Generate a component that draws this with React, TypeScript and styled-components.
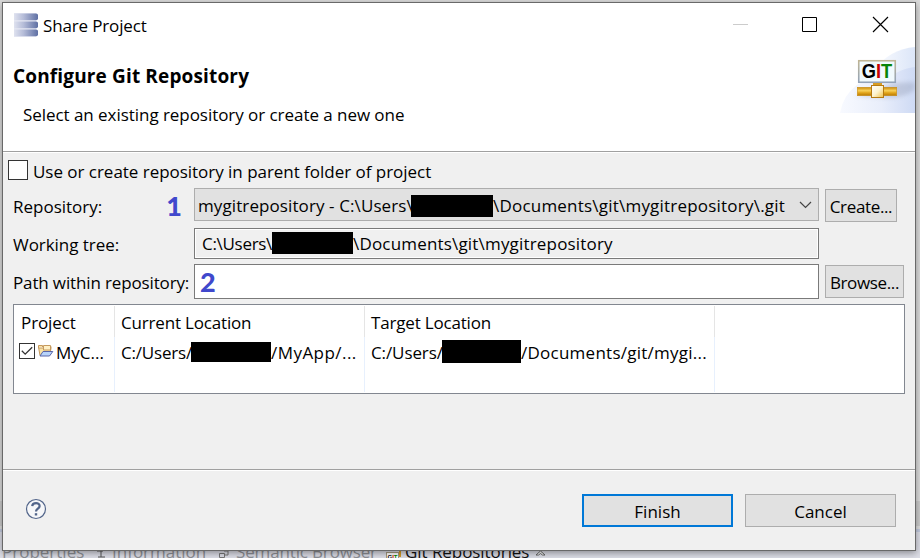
import React from 'react';
import styled, { createGlobalStyle } from 'styled-components';

const Global = createGlobalStyle`
  *, *::before, *::after { box-sizing: border-box; }
  html, body { margin: 0; padding: 0; overflow: hidden; }
  body { font: 17px/24px "Open Sans", "Segoe UI", sans-serif; color: #000; }
`;

const Screen = styled.div`
  position: relative;
  width: 920px;
  height: 558px;
  padding: 2px 0 0 2px;
  overflow: hidden;
  background: linear-gradient(#dcdcdc 0 501px, #cccccc 501px 526px, #dedede 526px 529px, #c3cbdf 529px 532px, #dcdde6 532px);
`;

const Text = styled.span<{ $ls?: number }>`
  display: block;
  flex: none;
  height: 24px;
  line-height: 26px;
  white-space: pre;
  letter-spacing: ${(p) => p.$ls ?? 0}px;
`;

const TabStrip = styled.div`
  position: absolute;
  left: 0;
  top: 539px;
  width: 920px;
  height: 24px;
`;

const BackTab = styled.div<{ $x: number; $active?: boolean }>`
  position: absolute;
  left: ${(p) => p.$x}px;
  top: 0;
  display: flex;
  align-items: flex-start;
  color: ${(p) => (p.$active ? '#111' : '#8d8f95')};
`;

const TabIcon = styled.svg<{ $gap?: number }>`
  display: block;
  flex: none;
  margin: 8px ${(p) => p.$gap ?? 4}px 0 0;
`;

const Dialog = styled.div`
  position: relative;
  display: flex;
  flex-direction: column;
  width: 914px;
  height: 549px;
  border: 1px solid #696969;
  background: #f0f0f0;
  box-shadow: 0 2px 7px rgba(0, 0, 0, 0.38);
`;

const Header = styled.header`
  display: flex;
  justify-content: space-between;
  height: 150px;
  background: #fff;
  border-bottom: 1px solid #fff;
  box-shadow: inset 0 -1px #a0a0a0;
`;

const HeaderText = styled.div`
  padding: 10px 0 0 10px;
`;

const TitleRow = styled.div`
  display: flex;
  gap: 5px;
  height: 24px;
  padding-left: 1px;
`;

const Heading = styled.h1`
  margin: 27px 0 0;
  height: 24px;
  font-size: 19px;
  line-height: 24px;
  font-weight: 700;
  letter-spacing: 0.15px;
  white-space: nowrap;
`;

const Subtitle = styled.div`
  margin: 14px 0 0 10px;
`;

const HeaderSide = styled.div`
  display: flex;
  flex-direction: column;
  align-items: flex-end;
`;

const WindowButtons = styled.div`
  display: flex;
  height: 44px;
  padding: 13px 26px 0 0;
`;

const Body = styled.main`
  display: flex;
  flex-direction: column;
  height: 318px;
  padding: 7px 10px 0;
  border-bottom: 1px solid #fff;
  box-shadow: inset 0 -1px #a0a0a0;
`;

const CheckRow = styled.label`
  display: flex;
  gap: 5px;
  height: 28px;
  margin-left: -5px;
`;

const CheckLabel = styled(Text)`
  line-height: 24px;
`;

const CheckBox = styled.span`
  flex: none;
  width: 20px;
  height: 20px;
  border: 1px solid #333;
  background: #fff;
`;

const FormRow = styled.div<{ $height: number }>`
  display: grid;
  grid-template-columns: 181px 625px auto;
  justify-content: start;
  height: ${(p) => p.$height}px;
`;

const LabelCell = styled.div<{ $top: number }>`
  display: flex;
  justify-content: space-between;
  padding: ${(p) => p.$top}px 12px 0 0;
`;

const Marker = styled.span`
  height: 24px;
  padding-left: 1px;
  font-family: Lato, "Open Sans", sans-serif;
  font-size: 27px;
  line-height: 23px;
  font-weight: 900;
  color: #4048cc;
`;

const Combo = styled.div`
  display: flex;
  height: 33px;
  padding: 4px 6px 0 3px;
  border: 1px solid #adadad;
  background: #e1e1e1;
`;

const ComboArrow = styled.svg`
  margin: 8px 0 0 auto;
`;

const Field = styled.div<{ $height: number; $readOnly?: boolean }>`
  display: flex;
  height: ${(p) => p.$height}px;
  padding: ${(p) => (p.$readOnly ? '2px 0 0 7px' : '5px 0 0 4px')};
  border: 1px solid #7a7a7a;
  background: ${(p) => (p.$readOnly ? '#f0f0f0' : '#fff')};
  box-shadow: inset 0 0 0 1px #fff;
`;

const PathPart = styled(Text)<{ $w: number }>`
  width: ${(p) => p.$w}px;
`;

const Redaction = styled.span<{ $w: number; $h: number; $top?: number }>`
  flex: none;
  position: relative;
  width: ${(p) => p.$w}px;
  height: ${(p) => p.$h}px;
  margin-top: ${(p) => p.$top ?? 0}px;
  background: #000;
`;

const Button = styled.button<{ $w: number; $primary?: boolean; $ls?: number }>`
  width: ${(p) => p.$w}px;
  height: 33px;
  padding: ${(p) => (p.$primary ? '4px 0 1px' : '5px 0 2px')};
  border: ${(p) => (p.$primary ? '2px solid #0078d7' : '1px solid #adadad')};
  border-radius: 0;
  background: #e1e1e1;
  color: #000;
  font: inherit;
  letter-spacing: ${(p) => p.$ls ?? 0}px;
  white-space: nowrap;
`;

const SideButton = styled(Button)`
  margin: 1px 0 0 6px;
`;

const Table = styled.div`
  display: grid;
  grid-template-columns: 100px 250px 350px 1fr;
  grid-template-rows: 31px 55px;
  width: 892px;
  height: 90px;
  margin-top: 5px;
  padding: 1px;
  border: 1px solid #828790;
  background: #fff;
`;

const HeadCell = styled.div`
  padding: 4px 0 0 6px;
  border-right: 1px solid #e5e5e5;
`;

const Cell = styled.div`
  display: flex;
  padding: 3px 0 0 6px;
  border-right: 1px solid #e7f0fd;
`;

const EmptyCell = styled.div``;

const Footer = styled.footer`
  display: flex;
  align-items: flex-start;
  height: 79px;
  padding: 23px 19px 0 22px;
`;

const Actions = styled.div`
  display: flex;
  gap: 12px;
  margin-left: auto;
`;

function DatabaseIcon() {
  return (
    <svg width="24" height="24" viewBox="0 0 24 24">
      <defs>
        <linearGradient id="db">
          <stop offset="0" stopColor="#dfe2ef" />
          <stop offset=".4" stopColor="#b5bcd8" />
          <stop offset="1" stopColor="#5f70a4" />
        </linearGradient>
      </defs>
      <rect width="22.5" height="24" fill="#e6e8f3" />
      {[0, 8, 16].map((y) => (
        <path key={y} d={`M0 ${y + 0.5}H22Q24 ${y + 0.5} 24 ${y + 2}V${y + 5.5}Q24 ${y + 7.3} 22 ${y + 7.3}H0Z`} fill="url(#db)" />
      ))}
    </svg>
  );
}

function WindowIcons() {
  return (
    <svg width="157" height="18" viewBox="0 0 157 18" fill="none">
      <path d="M1 8.5H16" stroke="#ccc" />
      <path d="M70.5 1.5H84.5V15.5H70.5Z" stroke="#000" />
      <path d="M141 1L156 16M156 1L141 16" stroke="#000" strokeWidth="1.15" />
    </svg>
  );
}

function GitBanner() {
  return (
    <svg width="75" height="66" viewBox="840 47 75 66">
      <defs>
        <linearGradient id="sky">
          <stop offset="0" stopColor="#f8faff" />
          <stop offset=".55" stopColor="#e9eefb" />
          <stop offset="1" stopColor="#cedaf4" />
        </linearGradient>
        <linearGradient id="sky2">
          <stop offset="0" stopColor="#fbfcff" />
          <stop offset="1" stopColor="#dce6f8" />
        </linearGradient>
        <linearGradient id="pipe" x2="0" y2="1">
          <stop offset="0" stopColor="#c98b0c" />
          <stop offset=".4" stopColor="#f8d058" />
          <stop offset=".65" stopColor="#e2a51c" />
          <stop offset="1" stopColor="#b87800" />
        </linearGradient>
        <linearGradient id="knob" x2="1" y2="1">
          <stop offset="0" stopColor="#fff" />
          <stop offset=".5" stopColor="#fdf3cf" />
          <stop offset="1" stopColor="#efc14a" />
        </linearGradient>
        <linearGradient id="frame" x2="0" y2="1">
          <stop offset="0" stopColor="#c0b594" />
          <stop offset="1" stopColor="#93a3b9" />
        </linearGradient>
        <filter id="soft" x="-30%" y="-50%" width="160%" height="200%">
          <feGaussianBlur stdDeviation="2" />
        </filter>
      </defs>
      <path d="M874 70Q890 49 915 47V113H874Z" fill="url(#sky2)" />
      <path d="M840 113Q843 95 858 84Q885 77 896 73Q905 68 915 67V113Z" fill="url(#sky)" />
      <path d="M855 96Q884 87 894 83L915 82V90Q903 98 888 98Z" fill="#8791aa" opacity=".32" filter="url(#soft)" />
      <rect x="858.75" y="60.75" width="36.5" height="21.5" fill="#f1fafd" stroke="url(#frame)" strokeWidth="1.6" />
      <text x="861.8" y="78.4" textLength="30.5" lengthAdjust="spacingAndGlyphs" fontFamily="Liberation Sans, Arial, sans-serif" fontWeight="700" fontSize="20">
        G<tspan fill="#c90000">I</tspan><tspan fill="#078507">T</tspan>
      </text>
      <rect x="873" y="83" width="9" height="3" fill="#d89d22" />
      <rect x="857.3" y="87.3" width="39.4" height="8.4" fill="url(#pipe)" stroke="#ca8e18" strokeWidth=".6" />
      <rect x="871.5" y="85.5" width="12" height="12" fill="url(#knob)" stroke="#b57a12" />
    </svg>
  );
}

function Tick() {
  return (
    <svg width="16" height="16" viewBox="0 0 16 16" fill="none">
      <rect x=".5" y=".5" width="15" height="15" fill="#fff" stroke="#333" />
      <path d="M2.8 7.8L6.2 11.2L13.2 4.2" stroke="#333" strokeWidth="1.3" />
    </svg>
  );
}

function FolderIcon() {
  return (
    <svg width="17" height="14" viewBox="0 0 17 14">
      <path d="M1.5 3V1.5H5.5V3M1.5 3L3 11.5H12.5L14 4.5V2.5L8 2.5L7 4H1.5Z" fill="#fbe3a4" stroke="#c69a5e" />
      <path d="M6.5 1.5H13.5V6H6.5Z" fill="#fff0c4" stroke="#c69a5e" />
      <path d="M6 7.5H15.8L12.5 12H3L6 7.5Z" fill="#b8d4fa" stroke="#5a66a8" />
    </svg>
  );
}

const RowIcon = styled.span<{ $top: number; $ml?: number; $mr?: number }>`
  display: flex;
  flex: none;
  align-self: flex-start;
  margin: ${(p) => p.$top}px ${(p) => p.$mr ?? 0}px 0 ${(p) => p.$ml ?? 0}px;
`;

function HelpIcon() {
  return (
    <svg width="22" height="22" viewBox="0 0 22 22" fill="none" stroke="#52658a">
      <circle cx="11" cy="11" r="9.5" strokeWidth="1.2" fill="#f6f7f9" />
      <path d="M7.2 8.1C7.5 4.2 14.8 4.2 14.6 8.1C14.5 10.5 11 10.6 11 13.4" strokeWidth="2.2" />
      <path d="M11 15.2V17.5" strokeWidth="2.4" />
    </svg>
  );
}

export default function App() {
  return (
    <>
      <Global />
      <Screen>
        <TabStrip>
          <BackTab $x={2}><Text>Properties</Text></BackTab>
          <BackTab $x={94}>
            <TabIcon width="14" height="14" $gap={4}>
              <path d="M3 4H9M7 4V10M4 10H11" stroke="#555" fill="none" />
              <path d="M0 12H13" stroke="#9db4d8" strokeWidth="2" />
            </TabIcon>
            <Text>Information</Text>
          </BackTab>
          <BackTab $x={217}>
            <TabIcon width="15" height="14" $gap={4}>
              <path d="M2.5 6.5H7.5V10.5H2.5ZM7 4H11V8H8" stroke="#777" fill="none" />
              <path d="M8 12H14" stroke="#9db4d8" strokeWidth="2" />
            </TabIcon>
            <Text $ls={-0.15}>Semantic Browser</Text>
          </BackTab>
          <BackTab $x={386} $active>
            <TabIcon width="15" height="14" $gap={4}>
              <path d="M12 3H14V10" stroke="#d59a25" strokeWidth="2" fill="none" />
              <rect x=".5" y="5.5" width="12" height="8" fill="#fff" stroke="#a59b82" />
              <text x="1.5" y="12" fontSize="6" fontWeight="700" fontFamily="Liberation Sans, sans-serif">
                G<tspan fill="#c00">I</tspan><tspan fill="#080">T</tspan>
              </text>
            </TabIcon>
            <Text $ls={-0.06}>Git Repositories</Text>
            <TabIcon width="20" height="14">
              <path d="M7 8L11.5 4L16 8H13.5L11.5 6.5L9.5 8Z" stroke="#666" fill="#fff" />
            </TabIcon>
          </BackTab>
        </TabStrip>

        <Dialog>
          <Header>
            <HeaderText>
              <TitleRow>
                <DatabaseIcon />
                <Text $ls={-0.15}>Share Project</Text>
              </TitleRow>
              <Heading>Configure Git Repository</Heading>
              <Subtitle><Text $ls={-0.05}>Select an existing repository or create a new one</Text></Subtitle>
            </HeaderText>
            <HeaderSide>
              <WindowButtons><WindowIcons /></WindowButtons>
              <GitBanner />
            </HeaderSide>
          </Header>

          <Body>
            <CheckRow>
              <CheckBox />
              <CheckLabel $ls={-0.03}>Use or create repository in parent folder of project</CheckLabel>
            </CheckRow>

            <FormRow $height={40}>
              <LabelCell $top={6}>
                <Text>Repository:</Text>
                <Marker>1</Marker>
              </LabelCell>
              <Combo>
                <PathPart $w={213} $ls={0.1}>{'mygitrepository - C:\\Users\\'}</PathPart>
                <Redaction $w={82} $h={22} $top={2} />
                <Text $ls={0.21}>{'\\Documents\\git\\mygitrepository\\.git'}</Text>
                <ComboArrow width="13" height="8" fill="none">
                  <path d="M1 1L6.5 6.5L12 1" stroke="#444" strokeWidth="1.2" />
                </ComboArrow>
              </Combo>
              <SideButton $w={72} $ls={-0.35}>Create...</SideButton>
            </FormRow>

            <FormRow $height={36}>
              <LabelCell $top={4}><Text $ls={-0.05}>Working tree:</Text></LabelCell>
              <Field $height={31} $readOnly>
                <PathPart $w={70} $ls={-0.3}>{'C:\\Users\\'}</PathPart>
                <Redaction $w={81} $h={22} $top={1} />
                <Text $ls={0.18}>{'\\Documents\\git\\mygitrepository'}</Text>
              </Field>
            </FormRow>

            <FormRow $height={35}>
              <LabelCell $top={6}><Text $ls={-0.14}>Path within repository:</Text></LabelCell>
              <Field $height={35}><Marker>2</Marker></Field>
              <SideButton $w={79} $ls={-0.35}>Browse...</SideButton>
            </FormRow>

            <Table>
              <HeadCell><Text $ls={-0.1}>Project</Text></HeadCell>
              <HeadCell><Text $ls={-0.18}>Current Location</Text></HeadCell>
              <HeadCell><Text $ls={-0.18}>Target Location</Text></HeadCell>
              <EmptyCell />
              <Cell>
                <RowIcon $top={3} $ml={-2}><Tick /></RowIcon>
                <RowIcon $top={4} $ml={2} $mr={2}><FolderIcon /></RowIcon>
                <Text>MyC...</Text>
              </Cell>
              <Cell>
                <PathPart $w={70} $ls={-0.2}>C:/Users/</PathPart>
                <Redaction $w={80} $h={20} $top={2} />
                <Text $ls={0.45}>/MyApp/...</Text>
              </Cell>
              <Cell>
                <PathPart $w={71} $ls={-0.1}>C:/Users/</PathPart>
                <Redaction $w={79} $h={23} />
                <Text $ls={0.25}>/Documents/git/mygi...</Text>
              </Cell>
              <EmptyCell />
            </Table>
          </Body>

          <Footer>
            <RowIcon $top={4}><HelpIcon /></RowIcon>
            <Actions>
              <Button $w={151} $primary>Finish</Button>
              <Button $w={151}>Cancel</Button>
            </Actions>
          </Footer>
        </Dialog>
      </Screen>
    </>
  );
}
